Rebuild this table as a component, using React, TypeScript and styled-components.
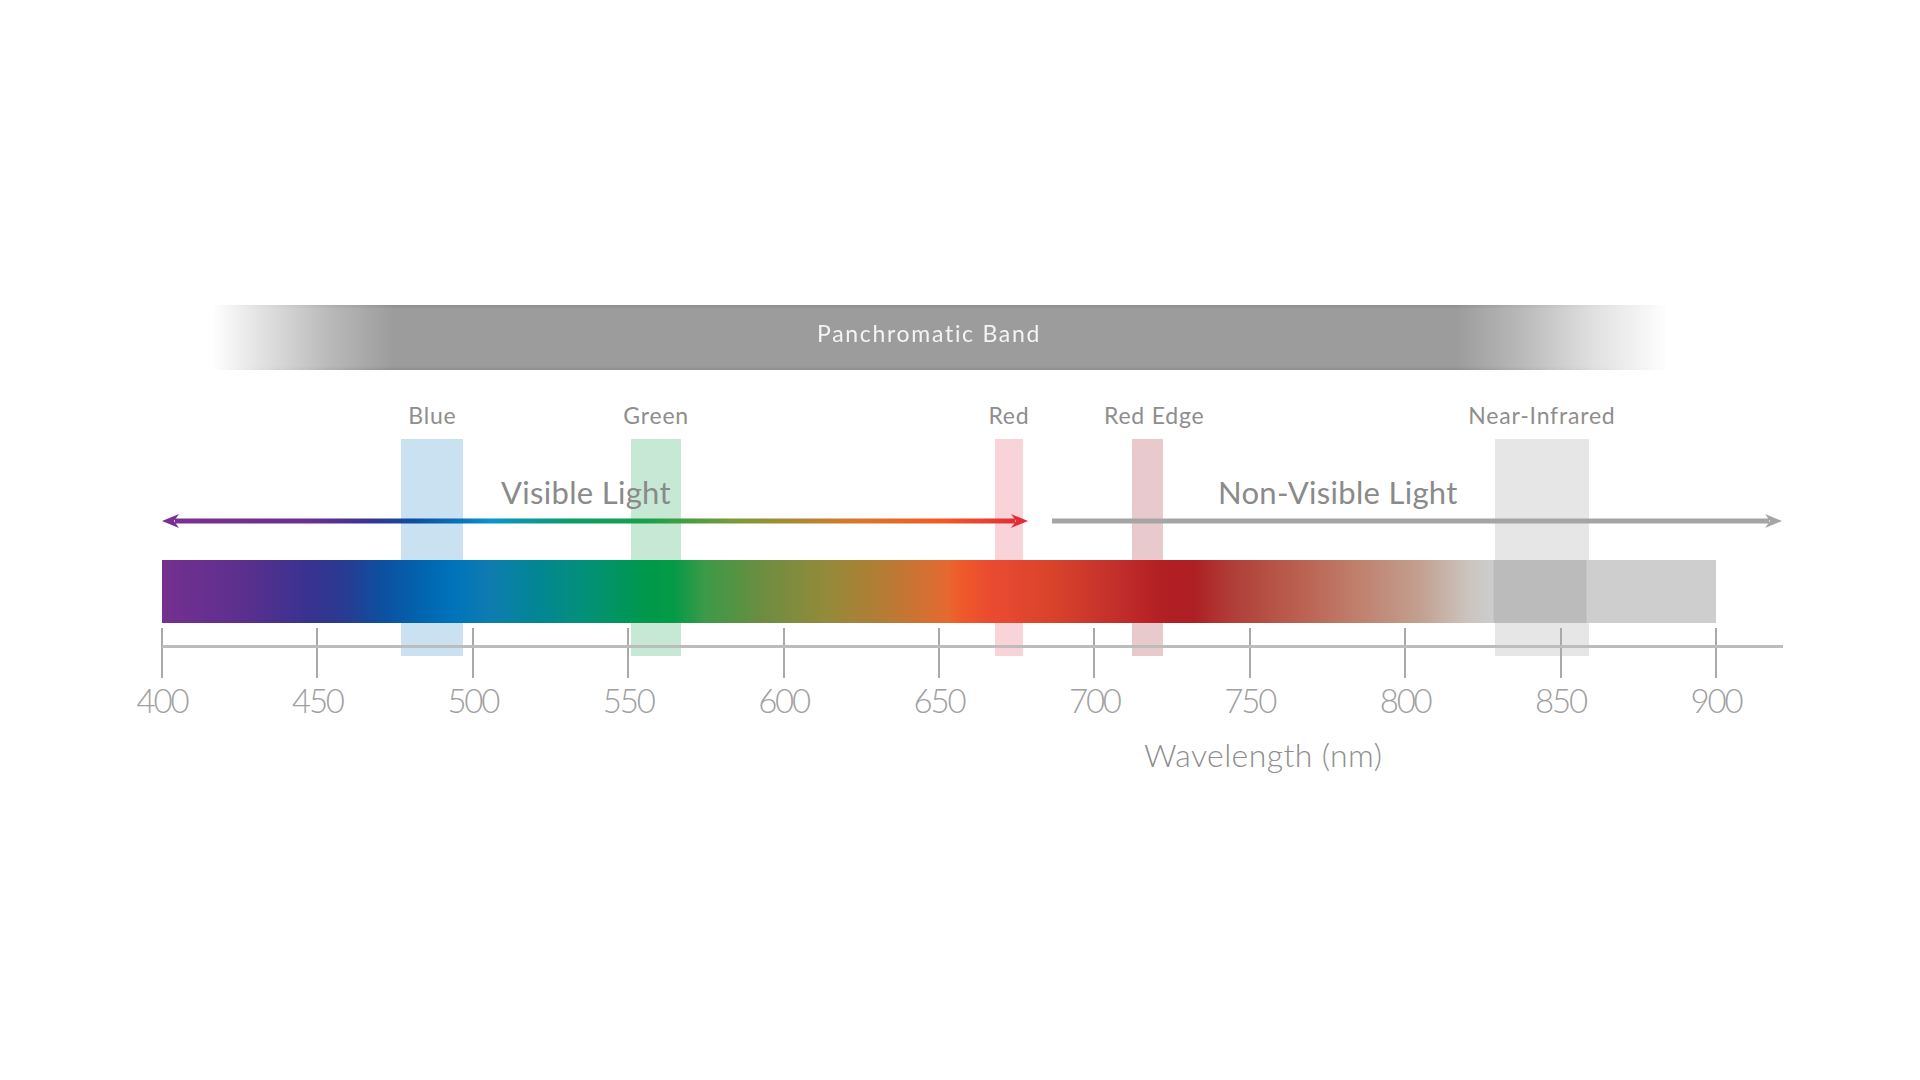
import React from "react";
import styled, { createGlobalStyle } from "styled-components";

// chart scale: 400nm sits at x=162, 50nm = 155.4px
const NM_START = 400;
const NM_END = 900;
const PLOT_WIDTH = 1554;
const PX_PER_NM = PLOT_WIDTH / (NM_END - NM_START);
const toX = (nm: number) => (nm - NM_START) * PX_PER_NM;

interface Band {
  name: string;
  from: number;
  to: number;
  color: string;
  labelShift?: number;
}

const bands: Band[] = [
  { name: "Blue", from: 477, to: 497, color: "#c9e1f0" },
  { name: "Green", from: 551, to: 567, color: "#c8e8d6" },
  { name: "Red", from: 668, to: 677, color: "#f8d4d8" },
  { name: "Red Edge", from: 712, to: 722, color: "#e8cacd", labelShift: 7 },
  { name: "Near-Infrared", from: 829, to: 859, color: "#e6e6e6" },
];

const ticks = Array.from({ length: 11 }, (_, i) => NM_START + i * 50);

const GlobalStyle = createGlobalStyle`
  html, body {
    margin: 0;
    padding: 0;
    background: #ffffff;
  }
  body {
    width: 1920px;
    height: 1080px;
    overflow: hidden;
    font-family: Lato, "Open Sans", "Liberation Sans", sans-serif;
  }
`;

const Page = styled.div`
  width: 1920px;
  height: 1080px;
  padding-top: 305px;
  box-sizing: border-box;
`;

const Chart = styled.div`
  margin-left: 162px;
  width: 1640px;
  display: flex;
  flex-direction: column;
`;

const PanBar = styled.div`
  margin-left: 50px;
  width: 1456px;
  height: 65px;
  display: flex;
  align-items: center;
  justify-content: center;
  padding: 0 22px 9px 0;
  box-sizing: border-box;
  background: linear-gradient(
    to bottom,
    #8e8e8e 0,
    #9c9c9c 4px,
    #9c9c9c calc(100% - 4px),
    #8e8e8e 100%
  );
  -webkit-mask-image: linear-gradient(
    to right,
    transparent 0%,
    rgba(0, 0, 0, 0.35) 4%,
    rgba(0, 0, 0, 0.7) 8%,
    #000 12.5%,
    #000 85.5%,
    rgba(0, 0, 0, 0.7) 90%,
    rgba(0, 0, 0, 0.3) 95%,
    transparent 100%
  );
  mask-image: linear-gradient(
    to right,
    transparent 0%,
    rgba(0, 0, 0, 0.35) 4%,
    rgba(0, 0, 0, 0.7) 8%,
    #000 12.5%,
    #000 85.5%,
    rgba(0, 0, 0, 0.7) 90%,
    rgba(0, 0, 0, 0.3) 95%,
    transparent 100%
  );
`;

const PanLabel = styled.span`
  color: #f4f4f4;
  font-size: 23px;
  line-height: 26px;
  letter-spacing: 1.7px;
`;

const Plot = styled.div`
  position: relative;
  display: flex;
  flex-direction: column;
`;

const BandLayer = styled.div`
  position: absolute;
  top: 69px;
  left: 0;
  width: ${PLOT_WIDTH}px;
  height: 217px;
  z-index: 0;
`;

const BandStrip = styled.div<{ $color: string }>`
  position: absolute;
  top: 0;
  height: 100%;
  background: ${(p) => p.$color};
`;

const BandLabel = styled.span`
  position: absolute;
  bottom: calc(100% + 12px);
  left: 50%;
  white-space: nowrap;
  color: #8e8e8e;
  font-size: 23px;
  line-height: 24px;
  letter-spacing: 0.8px;
`;

const Layer = styled.div`
  position: relative;
  z-index: 1;
  display: flex;
  flex-direction: column;
`;

const ArrowRow = styled.div`
  margin-top: 105px;
  display: flex;
  gap: 24px;
`;

const ArrowGroup = styled.div<{ $width: number }>`
  width: ${(p) => p.$width}px;
  display: flex;
  flex-direction: column;
`;

const ArrowTitle = styled.span<{ $offset: number }>`
  padding-left: ${(p) => p.$offset}px;
  margin-bottom: 4px;
  color: #8a8a8a;
  font-size: 31px;
  line-height: 34px;
  letter-spacing: 0.3px;
  white-space: nowrap;
`;

const Spectrum = styled.div`
  margin-top: 31px;
  width: ${PLOT_WIDTH}px;
  height: 63px;
  background: linear-gradient(
    to right,
    #74308f 0px,
    #5b2f8e 83px,
    #3a3290 144px,
    #2a3a92 181px,
    #0d4f9f 218px,
    #0068b1 267px,
    #0073bb 291px,
    #0e7cb0 328px,
    #018693 377px,
    #03907a 420px,
    #00994a 487px,
    #049a47 512px,
    #3a9a48 542px,
    #6f8d40 603px,
    #948a3a 665px,
    #b87b35 726px,
    #e66830 787px,
    #ef5a2a 798px,
    #ea4b30 829px,
    #d9432b 890px,
    #c4302b 951px,
    #b21f24 1000px,
    #ae1f24 1031px,
    #b0403a 1074px,
    #ba5f4f 1135px,
    #c0806d 1196px,
    #c39f8f 1257px,
    #cbc4be 1306px,
    #cdcdcd 1331px,
    #bbbbbb 1332px,
    #bbbbbb 1424px,
    #cecece 1425px,
    #cecece ${PLOT_WIDTH}px
  );
`;

const Axis = styled.div`
  position: relative;
  margin-top: 5px;
  width: ${PLOT_WIDTH + 2}px;
  margin-left: -1px;
  height: 50px;
  display: flex;
  justify-content: space-between;

  &::before {
    content: "";
    position: absolute;
    left: 1px;
    top: 17px;
    width: 1621px;
    height: 3px;
    background: #bcbcbc;
  }
`;

const Tick = styled.div`
  width: 2px;
  height: 100%;
  background: #a9a9a9;
`;

const TickLabels = styled.div`
  margin-top: 4px;
  margin-left: -${PX_PER_NM * 25}px;
  display: grid;
  grid-template-columns: repeat(${ticks.length}, ${PX_PER_NM * 50}px);
`;

const TickLabel = styled.span`
  text-align: center;
  color: #a0a0a0;
  font-size: 33px;
  line-height: 36px;
  letter-spacing: -2.2px;
  font-weight: 300;
`;

const AxisTitle = styled.span`
  margin-top: 19px;
  padding-left: 982px;
  color: #8e8e8e;
  font-size: 32px;
  line-height: 36px;
  letter-spacing: 0.4px;
  font-weight: 300;
  white-space: nowrap;
`;

interface ArrowProps {
  width: number;
  gradientId?: string;
  stops?: [number, string][];
  color?: string;
  bothEnds?: boolean;
}

const SpanArrow: React.FC<ArrowProps> = ({ width, gradientId, stops, color, bothEnds }) => {
  const h = 16;
  const mid = h / 2;
  const head = 17;
  const paint = gradientId ? `url(#${gradientId})` : color;
  return (
    <svg width={width} height={h} viewBox={`0 0 ${width} ${h}`} style={{ display: "block" }}>
      {gradientId && stops && (
        <defs>
          <linearGradient id={gradientId} gradientUnits="userSpaceOnUse" x1="0" y1="0" x2={width} y2="0">
            {stops.map(([o, c]) => (
              <stop key={o} offset={o} stopColor={c} />
            ))}
          </linearGradient>
        </defs>
      )}
      <rect
        x={bothEnds ? head - 4 : 0}
        y={mid - 2.5}
        width={width - (bothEnds ? 2 * head - 8 : head - 4)}
        height={5}
        fill={paint}
      />
      {bothEnds && <polygon points={`0,${mid} ${head},1 ${head - 5},${mid} ${head},${h - 1}`} fill={paint} />}
      <polygon
        points={`${width},${mid} ${width - head},1 ${width - head + 5},${mid} ${width - head},${h - 1}`}
        fill={paint}
      />
    </svg>
  );
};

const visibleStops: [number, string][] = [
  [0, "#7b2f91"],
  [0.17, "#6a2f90"],
  [0.24, "#3a3591"],
  [0.29, "#0b4f9f"],
  [0.34, "#0a6fb8"],
  [0.38, "#0a95cc"],
  [0.47, "#0a9c6a"],
  [0.56, "#1aa04a"],
  [0.66, "#7a9a3a"],
  [0.8, "#d8782c"],
  [0.9, "#f05a28"],
  [1, "#e0283a"],
];

const App: React.FC = () => {
  return (
    <>
      <GlobalStyle />
      <Page>
        <Chart>
          <PanBar>
            <PanLabel>Panchromatic Band</PanLabel>
          </PanBar>
          <Plot>
            <BandLayer>
              {bands.map((b) => (
                <BandStrip
                  key={b.name}
                  $color={b.color}
                  style={{ left: toX(b.from), width: toX(b.to) - toX(b.from) }}
                >
                  <BandLabel style={{ transform: `translateX(calc(-50% + ${b.labelShift ?? 0}px))` }}>
                    {b.name}
                  </BandLabel>
                </BandStrip>
              ))}
            </BandLayer>
            <Layer>
              <ArrowRow>
                <ArrowGroup $width={866}>
                  <ArrowTitle $offset={339}>Visible Light</ArrowTitle>
                  <SpanArrow width={866} gradientId="visible" stops={visibleStops} bothEnds />
                </ArrowGroup>
                <ArrowGroup $width={730}>
                  <ArrowTitle $offset={166}>Non-Visible Light</ArrowTitle>
                  <SpanArrow width={730} color="#a5a5a5" />
                </ArrowGroup>
              </ArrowRow>
              <Spectrum />
              <Axis>
                {ticks.map((t) => (
                  <Tick key={t} />
                ))}
              </Axis>
              <TickLabels>
                {ticks.map((t) => (
                  <TickLabel key={t}>{t}</TickLabel>
                ))}
              </TickLabels>
              <AxisTitle>Wavelength (nm)</AxisTitle>
            </Layer>
          </Plot>
        </Chart>
      </Page>
    </>
  );
};

export default App;
